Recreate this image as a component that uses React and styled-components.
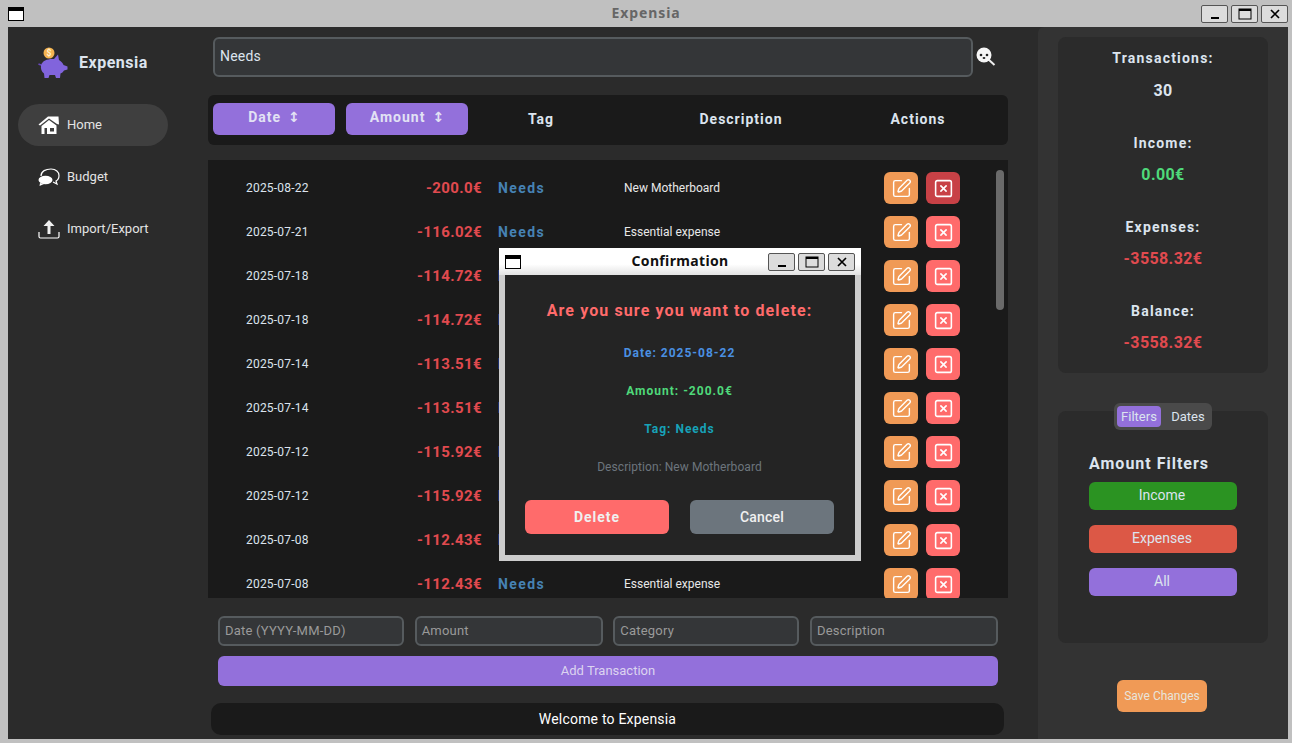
import React from "react";
import styled, { createGlobalStyle } from "styled-components";
import { SquarePen, SquareX } from "lucide-react";

const Global = createGlobalStyle`
  html, body { margin: 0; padding: 0; background: #c0c0c0; }
  body { font-family: Roboto, "Liberation Sans", sans-serif; }
  * { box-sizing: border-box; }
`;

const Win = styled.div`
  position: relative; width: 1292px; height: 743px; overflow: hidden;
  display: flex; flex-direction: column; background: #c0c0c0;
`;
const TitleBar = styled.div`
  height: 27px; flex: none; display: flex; align-items: center; justify-content: space-between;
  padding: 0 ${p => p.$light ? "6px 0 6px" : "4px 0 8px"}; position: relative;
  background: ${p => p.$light ? "linear-gradient(#ffffff 60%, #e2e2e2)" : "#c0c0c0"};
`;
const WinIcon = styled.div`
  width: 16px; height: 14px; border: 1px solid #000; border-top-width: 4px; background: #fff; flex: none;
`;
const TitleText = styled.div`
  position: absolute; left: 0; right: 0; text-align: center; top: 4px; line-height: 18px;
  font-weight: 700; font-family: "Noto Sans", sans-serif; font-size: 14px;
  letter-spacing: ${p => p.$dark ? "0.35px" : "0.9px"}; color: ${p => p.$dark ? "#111" : "#666"};
`;
const WinBtns = styled.div`display: flex; gap: 3px; position: relative;`;
const WinBtn = styled.div`
  width: 27px; height: 18px; border: 1px solid #555; border-radius: 2px; background: #dcdcdc;
  display: flex; align-items: center; justify-content: center;
`;
const Body = styled.div`
  flex: 1; margin: 0 4px 4px 8px; display: grid; grid-template-columns: 200px 830px 250px; min-height: 0; background: #2b2b2b;
`;
const Sidebar = styled.div`background: #2b2b2b; display: flex; flex-direction: column; padding: 16px 10px 0;`;
const Logo = styled.div`display: flex; align-items: center; gap: 9px; padding-left: 20px; height: 38px; margin-bottom: 23px;`;
const LogoText = styled.div`color: #dce4ee; font-weight: 700; font-size: 16px; letter-spacing: 0.5px;`;
const NavList = styled.div`display: flex; flex-direction: column; gap: 10px;`;
const NavItem = styled.div`
  width: 150px; height: 42px; border-radius: 21px; display: flex; align-items: center; gap: 7px; padding: 0 0 1px 20px;
  color: #e4e4e4; font-size: 13px; background: ${p => p.$active ? "#3f3f3f" : "transparent"};
`;
const Main = styled.div`background: #2b2b2b; display: flex; flex-direction: column; padding: 10px 30px 0 0;`;
const SearchRow = styled.div`display: flex; align-items: center; padding-left: 5px; gap: 3px; height: 40px;`;
const SearchInput = styled.div`
  width: 760px; height: 40px; background: #343638; border: 2px solid #565b5e; border-radius: 6px;
  color: #dce4ee; font-size: 14px; display: flex; align-items: center; padding: 0 5px 2px; letter-spacing: 0.2px;
`;
const Header = styled.div`
  margin-top: 18px; height: 50px; background: #1a1a1a; border-radius: 6px; display: flex; align-items: center; padding: 0 0 2px 5px;
`;
const SortBtn = styled.div`
  width: 122px; height: 32px; border-radius: 6px; background: #9370db; color: #e2e2f4; font-weight: 700; font-size: 14px;
  letter-spacing: 1px; display: flex; align-items: center; justify-content: center; gap: 7px; margin-right: 11px; padding-bottom: 4px;
`;
const SortArrow = styled.span`font-family: "DejaVu Sans", sans-serif; font-size: 14px; font-weight: 700; letter-spacing: 0;`;
const HeaderLabel = styled.div`
  color: #dce4ee; font-weight: 700; font-size: 14px; letter-spacing: 1px; text-align: center; width: ${p => p.$w}px; flex: none;
`;
const List = styled.div`
  margin-top: 15px; height: 438px; background: #1a1a1a; overflow: hidden; position: relative; padding-top: 6px;
`;
const Scrollbar = styled.div`
  position: absolute; left: 788px; top: 10px; width: 8px; height: 140px; border-radius: 4px; background: #6a6a6a;
`;
const Row = styled.div`display: flex; align-items: center; height: 44px; flex: none;`;
const DateCell = styled.div`width: 150px; padding-left: 38px; color: #dce4ee; font-size: 12px; letter-spacing: 0.2px; flex: none;`;
const AmountCell = styled.div`width: 124px; text-align: right; color: #e14a4f; font-weight: 700; font-size: 15px; letter-spacing: 0.4px; flex: none;`;
const TagCell = styled.div`width: 142px; padding-left: 16px; color: #4682b4; font-weight: 700; font-size: 14px; letter-spacing: 1.4px; flex: none;`;
const DescCell = styled.div`width: 260px; color: #e8e8e8; font-size: 12px; flex: none;`;
const ActionBtn = styled.div`
  width: 34px; height: 32px; border-radius: 6px; margin-right: 8px; flex: none; display: flex; align-items: center; justify-content: center;
  background: ${p => p.$bg}; color: #fff;
`;
const Form = styled.div`display: grid; grid-template-columns: 186px 188px 186px 188px; justify-content: space-between; padding: 0 10px; margin-top: 18px;`;
const Field = styled.div`
  height: 30px; background: #343638; border: 2px solid #565b5e; border-radius: 6px; color: #9a9a9a; font-size: 13px;
  display: flex; align-items: center; padding: 0 0 2px 5px; letter-spacing: 0.2px;
`;
const AddBtn = styled.div`
  margin: 10px 10px 0; height: 30px; background: #9370db; border-radius: 6px; color: #dcd4f0; font-size: 13px;
  display: flex; align-items: center; justify-content: center; padding-bottom: 2px;
`;
const Welcome = styled.div`
  margin: 17px 4px 0 3px; height: 32px; background: #1a1a1a; border-radius: 10px; color: #fff; font-size: 14px; letter-spacing: 0.2px;
  display: flex; align-items: center; justify-content: center;
`;
const Right = styled.div`
  background: #333333; padding: 10px 20px 0; display: flex; flex-direction: column; align-items: center; border-radius: 6px 0 0 0;
`;
const StatCard = styled.div`
  width: 210px; height: 336px; background: #2b2b2b; border-radius: 8px; display: flex; flex-direction: column; align-items: center; padding-top: 12px;
`;
const StatLabel = styled.div`color: #dce4ee; font-weight: 700; font-size: 14px; letter-spacing: 1.2px; line-height: 18px; margin-top: ${p => p.$first ? 0 : 33}px;`;
const StatValue = styled.div`color: ${p => p.$c}; font-weight: 700; font-size: 16px; letter-spacing: 0.4px; line-height: 20px; margin-top: ${p => p.$mt || 13}px;`;
const FilterCard = styled.div`
  width: 210px; height: 232px; margin-top: 38px; background: #2b2b2b; border-radius: 8px; position: relative; padding: 43px 31px 0;
`;
const Tabs = styled.div`
  position: absolute; left: 56px; top: -8px; width: 98px; height: 27px; background: #4a4a4a; border-radius: 6px; display: flex; align-items: center; gap: 3px; padding: 3px;
`;
const Tab = styled.div`
  width: ${p => p.$active ? 44 : 48}px; flex: none; height: 21px; border-radius: 4px; font-size: 13px; color: #dce4ee;
  display: flex; align-items: center; justify-content: center; background: ${p => p.$active ? "#9370db" : "transparent"};
`;
const FilterTitle = styled.div`color: #dce4ee; font-weight: 700; font-size: 16px; letter-spacing: 1px; line-height: 20px; margin-bottom: 8px;`;
const FilterBtn = styled.div`
  width: 148px; height: 28px; border-radius: 6px; background: ${p => p.$bg}; color: #dce4ee; font-size: 14px; margin-bottom: 15px;
  display: flex; align-items: center; justify-content: center; padding: 0 2px 3px 0;
`;
const SaveBtn = styled.div`
  width: 90px; height: 32px; margin: 37px 2px 0 0; border-radius: 6px; background: #f09a56; color: #e8e4dc; font-size: 12px;
  display: flex; align-items: center; justify-content: center;
`;
const Dialog = styled.div`
  position: absolute; left: 499px; top: 248px; width: 362px; height: 313px; background: #ccc;
  display: flex; flex-direction: column;
`;
const DialogBody = styled.div`
  margin: 0 6px 6px; flex: 1; background: #242424; display: flex; flex-direction: column; align-items: center; padding: 26px 1px 0 0;
`;
const Line = styled.div`
  color: ${p => p.$c}; font-size: ${p => p.$s || 12}px; font-weight: ${p => p.$w || 700}; letter-spacing: ${p => p.$ls ?? 1}px;
  line-height: 20px; margin-bottom: ${p => p.$mb || 18}px; text-align: center;
`;
const DialogBtns = styled.div`display: flex; gap: 21px; margin-top: 5px;`;
const DialogBtn = styled.div`
  width: 144px; height: 34px; border-radius: 6px; background: ${p => p.$bg}; color: #f0f0f0; font-size: 14px; font-weight: ${p => p.$w};
  letter-spacing: ${p => p.$ls}px; display: flex; align-items: center; justify-content: center;
`;

const Piggy = () => (
  <svg width="32" height="34" viewBox="0 0 32 34">
    <path fill="#8164dc" d="M3 20 C4.5 15.5 10 13.5 16 14 L20 9.5 L21 15 C23.5 16.5 25 18.5 25.5 20 L29.5 21.5 L29.5 24.5 L26 25.5 C25 27 24 28 22.5 28.5 L22 33 L18 33 L17 30 L11.5 30 L10.5 33 L6.5 33 L6 28.5 C3.5 26.5 2.5 24 3 20 Z" />
    <path d="M3 20 L0.5 19" stroke="#6a48c0" strokeWidth="1.5" />
    <circle cx="11" cy="8" r="5.5" fill="#f5b451" />
    <text x="11" y="11" fontSize="8.5" textAnchor="middle" fill="#fff2d0" fontFamily="Roboto" fontWeight="700">$</text>
  </svg>
);
const House = () => (
  <svg width="22" height="20" viewBox="0 0 22 20" fill="#fff">
    <path d="M0.5 9.5 L10 1.5 L20.5 1.5 L21 9.5 L19 9 L11 3.5 L2 10.5 Z" />
    <path d="M3.5 11 L11 5 L18.5 10.5 L18.5 19 L3.5 19 Z M6.5 13 V19 H9 V13 Z M12 13 V16.5 H16 V13 Z" fillRule="evenodd" />
  </svg>
);
const Chat = () => (
  <svg width="22" height="18" viewBox="0 0 22 18">
    <path d="M3 8 C3 3 8 1 13 1 C18 1 21 4 21 7.5 C21 10 20 12 18 13 L19 16 L15 14" fill="none" stroke="#fff" strokeWidth="1.2" />
    <ellipse cx="7.5" cy="12" rx="7" ry="4.2" fill="#fff" />
    <path d="M2 15 L1.5 18 L6 16 Z" fill="#fff" />
  </svg>
);
const Upload = () => (
  <svg width="22" height="20" viewBox="0 0 22 20">
    <path d="M1 13 V17.5 Q1 19 2.5 19 H19.5 Q21 19 21 17.5 V13" fill="none" stroke="#fff" strokeWidth="1.2" />
    <path d="M11 1 L16.5 7 H12.5 V15 H9.5 V7 H5.5 Z" fill="#f0f0f0" />
  </svg>
);
const SearchFace = () => (
  <svg width="20" height="20" viewBox="0 0 20 20">
    <path d="M12 12 L18.5 18" stroke="#eee" strokeWidth="2" />
    <circle cx="8" cy="8" r="7.5" fill="#f6f6f6" />
    <circle cx="5" cy="8" r="1.3" fill="#222" />
    <circle cx="11" cy="8" r="1.3" fill="#222" />
    <ellipse cx="8" cy="11" rx="1.4" ry="1.1" fill="#222" />
  </svg>
);
const Controls = () => (
  <WinBtns>
    <WinBtn><svg width="12" height="12"><rect x="2" y="9" width="8" height="2" /></svg></WinBtn>
    <WinBtn><svg width="14" height="12"><rect x="1" y="1" width="12" height="10" fill="none" stroke="#000" /><rect x="1" y="1" width="12" height="2" /></svg></WinBtn>
    <WinBtn><svg width="12" height="12"><path d="M2 2 L10 10 M10 2 L2 10" stroke="#000" strokeWidth="1.7" /></svg></WinBtn>
  </WinBtns>
);

const rows = [
  ["2025-08-22", "-200.0€", "New Motherboard"],
  ["2025-07-21", "-116.02€", "Essential expense"],
  ["2025-07-18", "-114.72€", "Essential expense"],
  ["2025-07-18", "-114.72€", "Essential expense"],
  ["2025-07-14", "-113.51€", "Essential expense"],
  ["2025-07-14", "-113.51€", "Essential expense"],
  ["2025-07-12", "-115.92€", "Essential expense"],
  ["2025-07-12", "-115.92€", "Essential expense"],
  ["2025-07-08", "-112.43€", "Essential expense"],
  ["2025-07-08", "-112.43€", "Essential expense"],
];

export default function App() {
  return (
    <Win>
      <Global />
      <TitleBar>
        <WinIcon />
        <TitleText>Expensia</TitleText>
        <Controls />
      </TitleBar>
      <Body>
        <Sidebar>
          <Logo><Piggy /><LogoText>Expensia</LogoText></Logo>
          <NavList>
            <NavItem $active><House />Home</NavItem>
            <NavItem><Chat />Budget</NavItem>
            <NavItem><Upload />Import/Export</NavItem>
          </NavList>
        </Sidebar>
        <Main>
          <SearchRow>
            <SearchInput>Needs</SearchInput>
            <SearchFace />
          </SearchRow>
          <Header>
            <SortBtn>Date <SortArrow>↕</SortArrow></SortBtn>
            <SortBtn>Amount <SortArrow>↕</SortArrow></SortBtn>
            <HeaderLabel $w={124}>Tag</HeaderLabel>
            <HeaderLabel $w={276}>Description</HeaderLabel>
            <HeaderLabel $w={78}>Actions</HeaderLabel>
          </Header>
          <List>
            <Scrollbar />
            {rows.map((r, i) => (
              <Row key={i}>
                <DateCell>{r[0]}</DateCell>
                <AmountCell>{r[1]}</AmountCell>
                <TagCell>Needs</TagCell>
                <DescCell>{r[2]}</DescCell>
                <ActionBtn $bg="#f09a56"><SquarePen size={21} strokeWidth={1.6} /></ActionBtn>
                <ActionBtn $bg={i === 0 ? "#c84146" : "#ff6b6b"}><SquareX size={21} strokeWidth={1.8} /></ActionBtn>
              </Row>
            ))}
          </List>
          <Form>
            <Field>Date (YYYY-MM-DD)</Field>
            <Field>Amount</Field>
            <Field>Category</Field>
            <Field>Description</Field>
          </Form>
          <AddBtn>Add Transaction</AddBtn>
          <Welcome>Welcome to Expensia</Welcome>
        </Main>
        <Right>
          <StatCard>
            <StatLabel $first>Transactions:</StatLabel>
            <StatValue $c="#dce4ee" $mt={14}>30</StatValue>
            <StatLabel>Income:</StatLabel>
            <StatValue $c="#4fd97a">0.00€</StatValue>
            <StatLabel>Expenses:</StatLabel>
            <StatValue $c="#e14a4f">-3558.32€</StatValue>
            <StatLabel>Balance:</StatLabel>
            <StatValue $c="#e14a4f">-3558.32€</StatValue>
          </StatCard>
          <FilterCard>
            <Tabs>
              <Tab $active>Filters</Tab>
              <Tab>Dates</Tab>
            </Tabs>
            <FilterTitle>Amount Filters</FilterTitle>
            <FilterBtn $bg="#2b9322">Income</FilterBtn>
            <FilterBtn $bg="#dc5846">Expenses</FilterBtn>
            <FilterBtn $bg="#9370db">All</FilterBtn>
          </FilterCard>
          <SaveBtn>Save Changes</SaveBtn>
        </Right>
      </Body>
      <Dialog>
        <TitleBar $light>
          <WinIcon />
          <TitleText $dark>Confirmation</TitleText>
          <Controls />
        </TitleBar>
        <DialogBody>
          <Line $c="#ff6b6b" $s={16} $ls={1.1} $mb={22}>Are you sure you want to delete:</Line>
          <Line $c="#4a90e2">Date: 2025-08-22</Line>
          <Line $c="#4fd97a">Amount: -200.0€</Line>
          <Line $c="#17a2b8">Tag: Needs</Line>
          <Line $c="#6c757d" $w={400} $ls={0.07}>Description: New Motherboard</Line>
          <DialogBtns>
            <DialogBtn $bg="#ff6b6b" $w={700} $ls={1}>Delete</DialogBtn>
            <DialogBtn $bg="#6c757d" $w={500} $ls={0.2}>Cancel</DialogBtn>
          </DialogBtns>
        </DialogBody>
      </Dialog>
    </Win>
  );
}
